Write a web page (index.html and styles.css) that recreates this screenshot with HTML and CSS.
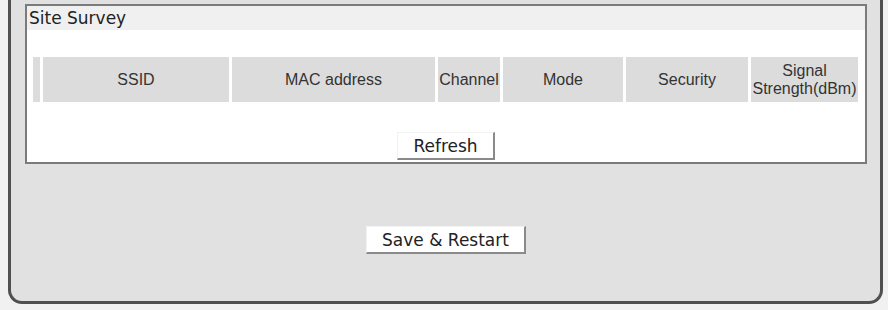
FILE: index.html
```html
<!DOCTYPE html>
<html lang="en">
<head>
    <meta charset="UTF-8">
    <title>Site Survey</title>
    <link rel="stylesheet" href="styles.css">
</head>
<body>

    <div class="panel">
        <div class="box">
            <div class="box-title">Site Survey</div>

            <table class="survey">
                <thead>
                    <tr>
                        <th class="col-check"></th>
                        <th class="col-ssid">SSID</th>
                        <th class="col-mac">MAC address</th>
                        <th class="col-channel">Channel</th>
                        <th class="col-mode">Mode</th>
                        <th class="col-security">Security</th>
                        <th class="col-signal">Signal Strength(dBm)</th>
                    </tr>
                </thead>
                <tbody></tbody>
            </table>

            <div class="box-actions">
                <button class="btn" type="button">Refresh</button>
            </div>
        </div>

        <div class="panel-actions">
            <button class="btn" type="button">Save &amp; Restart</button>
        </div>
    </div>

</body>
</html>
```

FILE: styles.css
```css
:root {
    --page-background: #f1f1f1;
    --panel-background: #e1e1e1;
    --panel-border: #505050;
    --box-border: #7b7b7b;
    --title-background: #f0f0f0;
    --cell-background: #dcdcdc;
    --text-color: #222;
}

* {
    box-sizing: border-box;
}

body {
    margin: 0;
    background-color: var(--page-background);
    font-family: 'DejaVu Sans', Verdana, sans-serif;
    color: var(--text-color);
}

.panel {
    width: 875px;
    height: 304px;
    margin-left: 8px;
    padding: 4px 13px 0 14px;
    background-color: var(--panel-background);
    border: 3px solid var(--panel-border);
    border-top: none;
    border-radius: 0 0 14px 14px;
}

.box {
    background-color: #fff;
    border: 2px solid var(--box-border);
    height: 160px;
}

.box-title {
    background-color: var(--title-background);
    height: 24px;
    line-height: 24px;
    padding-left: 2px;
    font-size: 17px;
}

.survey {
    table-layout: fixed;
    width: 831px;
    margin: 24px 4px 0 3px;
    border-spacing: 3px;
    font-family: 'Liberation Sans', Arial, sans-serif;
}

.survey th {
    height: 45px;
    padding: 0;
    background-color: var(--cell-background);
    color: #333;
    font-size: 16px;
    font-weight: normal;
    line-height: 18px;
    text-align: center;
}

.col-check { width: 7px; }
.col-ssid { width: 186px; }
.col-mac { width: 203px; }
.col-channel { width: 62px; }
.col-mode { width: 120px; }
.col-security { width: 122px; }
.col-signal { width: 107px; }

.box-actions {
    margin-top: 27px;
    text-align: center;
}

.panel-actions {
    margin-top: 62px;
    text-align: center;
}

.btn {
    height: 28px;
    margin: 0;
    padding: 0 15px;
    background-color: #fff;
    border-style: solid;
    border-width: 1px 2px 2px 1px;
    border-color: #f2f2f2 #8a8a8a #8a8a8a #f2f2f2;
    font-family: 'DejaVu Sans', Verdana, sans-serif;
    font-size: 17px;
    color: var(--text-color);
    line-height: 24px;
}
```
